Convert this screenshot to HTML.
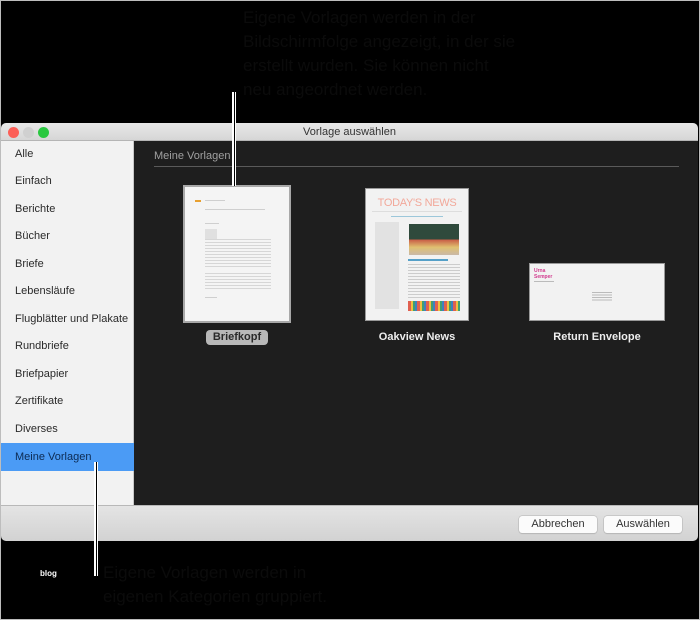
<!DOCTYPE html>
<html><head><meta charset="utf-8"><style>
*{margin:0;padding:0;box-sizing:border-box}
body{width:700px;height:620px;background:#000;position:relative;overflow:hidden;font-family:"Liberation Sans",sans-serif}
.frame{position:absolute;left:0;top:0;width:700px;height:620px;border:1px solid #bdbdbd}
.dim{position:absolute;color:#0b0b0b;font-size:17px;line-height:24px}
.win{position:absolute;left:1px;top:123px;width:697px;height:418px;border-radius:5px;overflow:hidden;background:#1e1e1e}
.title{position:absolute;left:0;top:0;width:100%;height:18px;background:linear-gradient(#e8e8e8,#d6d6d6);border-bottom:1px solid #b5b5b5;text-align:center;font-size:11px;line-height:18px;color:#333}
.dot{position:absolute;top:4px;width:11px;height:11px;border-radius:50%}
.side{position:absolute;left:0;top:18px;width:133px;height:364px;background:#f2f2f2;border-right:1px solid #c8c8c8}
.side div{position:absolute;left:14px;font-size:11px;color:#2a2a2a}
.sel{position:absolute;left:0;top:302px;width:133px;height:28px;background:#4b9bf5}
.foot{position:absolute;left:0;top:382px;width:100%;height:36px;background:linear-gradient(#e4e4e4,#d2d2d2);border-top:1px solid #b8b8b8}
.btn{position:absolute;top:10px;height:17px;background:#fbfbfb;border-radius:3px;box-shadow:0 0 0 .5px #b0b0b0,0 1px 1px #bbb;font-size:11px;line-height:17px;text-align:center;color:#333}
.lbl{position:absolute;color:#eee;font-size:11px;font-weight:bold;text-align:center}
.ln{position:absolute;height:1px;background:#cfcfcf}
</style></head><body>
<div class="frame"></div>
<div class="dim" style="left:243px;top:6px">Eigene Vorlagen werden in der<br>Bildschirmfolge angezeigt, in der sie<br>erstellt wurden. Sie können nicht<br>neu angeordnet werden.</div>
<div class="dim" style="left:103px;top:561px">Eigene Vorlagen werden in<br>eigenen Kategorien gruppiert.</div>
<div style="position:absolute;left:40px;top:569px;color:#fff;font-size:8px;font-weight:bold">blog</div>
<div class="win">
 <div class="title">Vorlage auswählen
  <div class="dot" style="left:7px;background:#fc5f57"></div>
  <div class="dot" style="left:22px;background:#d0d0d0"></div>
  <div class="dot" style="left:37px;background:#2ac840"></div>
 </div>
 <div class="side">
  <div class="sel" style="left:0"></div>
  <div style="top:7px">Alle</div>
  <div style="top:34px">Einfach</div>
  <div style="top:62px">Berichte</div>
  <div style="top:89px">Bücher</div>
  <div style="top:117px">Briefe</div>
  <div style="top:144px">Lebensläufe</div>
  <div style="top:172px">Flugblätter und Plakate</div>
  <div style="top:199px">Rundbriefe</div>
  <div style="top:227px">Briefpapier</div>
  <div style="top:254px">Zertifikate</div>
  <div style="top:282px">Diverses</div>
  <div style="top:310px;color:#0c2a52">Meine Vorlagen</div>
 </div>
 <div style="position:absolute;left:153px;top:27px;font-size:11px;color:#a0a0a0">Meine Vorlagen</div>
 <div style="position:absolute;left:153px;top:43px;width:525px;height:1px;background:#5a5a5a"></div>
 <div style="position:absolute;left:182px;top:62px;width:108px;height:138px;background:#f4f4f4;border:2px solid #a8a8a8">
  <div style="position:absolute;left:10px;top:13px;width:6px;height:2px;background:#e8a030"></div>
  <div class="ln" style="left:20px;top:13px;width:20px"></div>
  <div class="ln" style="left:20px;top:22px;width:60px"></div>
  <div class="ln" style="left:20px;top:36px;width:14px"></div>
  <div class="ln" style="left:20px;top:42px;width:12px;height:10px;background:#e0e0e0"></div>
  <div style="position:absolute;left:20px;top:52px;width:66px;height:30px;background:repeating-linear-gradient(#d6d6d6 0 1px,transparent 1px 3px)"></div>
  <div style="position:absolute;left:20px;top:86px;width:66px;height:18px;background:repeating-linear-gradient(#d6d6d6 0 1px,transparent 1px 3px)"></div>
  <div class="ln" style="left:20px;top:110px;width:12px"></div>
 </div>
 <div style="position:absolute;left:205px;top:207px;width:62px;height:15px;background:#b8b8b8;border-radius:4px;font-size:11px;font-weight:bold;color:#2a2a2a;text-align:center;line-height:15px">Briefkopf</div>
 <div style="position:absolute;left:364px;top:65px;width:104px;height:133px;background:#f2f2f2;border:1px solid #999">
  <div style="position:absolute;left:0;width:100%;top:8px;text-align:center;color:#f2a89a;font-size:11px;letter-spacing:-.3px">TODAY'S NEWS</div>
  <div class="ln" style="left:6px;top:22px;width:90px;background:#ddd"></div>
  <div class="ln" style="left:25px;top:27px;width:52px;background:#9cc7da"></div>
  <div style="position:absolute;left:9px;top:33px;width:24px;height:87px;background:#e2e2e2"></div>
  <div style="position:absolute;left:43px;top:35px;width:50px;height:31px;background:linear-gradient(#2f4a3c 0 50%,#c85a44 50%,#e0c070 75%,#c9b9a8)"></div>
  <div class="ln" style="left:42px;top:70px;width:40px;height:2px;background:#55a0c8"></div>
  <div style="position:absolute;left:42px;top:75px;width:52px;height:34px;background:repeating-linear-gradient(#ccc 0 1px,transparent 1px 3px)"></div>
  <div style="position:absolute;left:42px;top:112px;width:52px;height:10px;background:repeating-linear-gradient(90deg,#e06050 0 3px,#f0c040 3px 5px,#40a070 5px 7px,#4080c0 7px 9px)"></div>
 </div>
 <div class="lbl" style="left:356px;top:208px;width:120px">Oakview News</div>
 <div style="position:absolute;left:528px;top:140px;width:136px;height:58px;background:#f2f2f2;border:1px solid #999">
  <div style="position:absolute;left:4px;top:4px;font-size:5px;line-height:6px;color:#d23c8f;font-weight:bold">Urna<br>Semper</div>
  <div class="ln" style="left:4px;top:17px;width:20px;background:#bbb"></div>
  <div style="position:absolute;left:62px;top:28px;width:20px;height:10px;background:repeating-linear-gradient(#bbb 0 1px,transparent 1px 2.5px)"></div>
 </div>
 <div class="lbl" style="left:536px;top:208px;width:120px">Return Envelope</div>
 <div class="foot">
  <div class="btn" style="left:518px;width:78px">Abbrechen</div>
  <div class="btn" style="left:603px;width:78px">Auswählen</div>
 </div>
</div>
<div style="position:absolute;left:232px;top:92px;width:4px;height:94px;background:#fff"><div style="margin-left:1.5px;width:1px;height:100%;background:#000"></div></div>
<div style="position:absolute;left:94px;top:462px;width:4px;height:114px;background:#fff"><div style="margin-left:1.5px;width:1px;height:100%;background:#000"></div></div>
</body></html>
